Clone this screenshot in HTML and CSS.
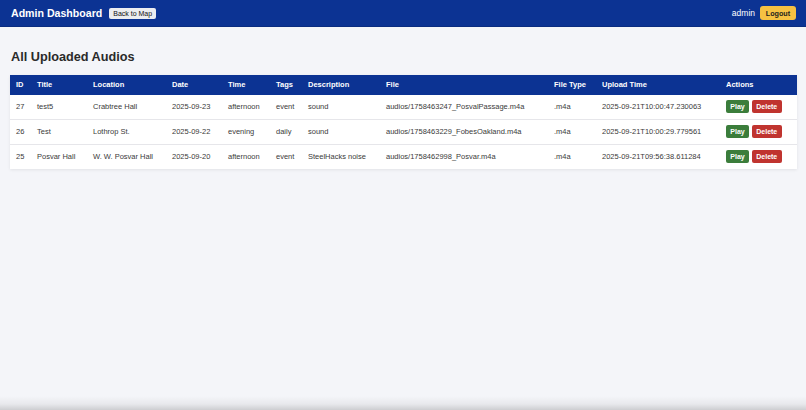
FILE: index.html
```html
<!DOCTYPE html>
<html lang="en">
<head>
<meta charset="utf-8">
<title>Admin Dashboard</title>
<link rel="stylesheet" href="styles.css">
</head>
<body>
<header class="topbar">
  <div class="brand">
    <span class="brand-title">Admin Dashboard</span>
    <button class="btn-map">Back to Map</button>
  </div>
  <div class="user">
    <span class="user-name">admin</span>
    <button class="btn-logout">Logout</button>
  </div>
</header>
<main class="content">
  <h1 class="page-title">All Uploaded Audios</h1>
  <table class="audio-table">
    <colgroup>
      <col class="c-id"><col class="c-title"><col class="c-loc"><col class="c-date"><col class="c-time"><col class="c-tags"><col class="c-desc"><col class="c-file"><col class="c-type"><col class="c-upload"><col class="c-actions">
    </colgroup>
    <thead>
      <tr><th>ID</th><th>Title</th><th>Location</th><th>Date</th><th>Time</th><th>Tags</th><th>Description</th><th>File</th><th>File Type</th><th>Upload Time</th><th>Actions</th></tr>
    </thead>
    <tbody>
      <tr><td>27</td><td>test5</td><td>Crabtree Hall</td><td>2025-09-23</td><td>afternoon</td><td>event</td><td>sound</td><td>audios/1758463247_PosvalPassage.m4a</td><td>.m4a</td><td>2025-09-21T10:00:47.230063</td><td class="actions"><button class="btn-play">Play</button><button class="btn-delete">Delete</button></td></tr>
      <tr><td>26</td><td>Test</td><td>Lothrop St.</td><td>2025-09-22</td><td>evening</td><td>daily</td><td>sound</td><td>audios/1758463229_FobesOakland.m4a</td><td>.m4a</td><td>2025-09-21T10:00:29.779561</td><td class="actions"><button class="btn-play">Play</button><button class="btn-delete">Delete</button></td></tr>
      <tr><td>25</td><td>Posvar Hall</td><td>W. W. Posvar Hall</td><td>2025-09-20</td><td>afternoon</td><td>event</td><td>SteelHacks noise</td><td>audios/1758462998_Posvar.m4a</td><td>.m4a</td><td>2025-09-21T09:56:38.611284</td><td class="actions"><button class="btn-play">Play</button><button class="btn-delete">Delete</button></td></tr>
    </tbody>
  </table>
</main>
</body>
</html>
```
FILE: styles.css
```css
html {
  height: 100%;
  background: #f4f5f9;
}
body {
  margin: 0;
  min-height: 100%;
  font-family: "Liberation Sans", Arial, sans-serif;
  color: #333;
  background: linear-gradient(to bottom, rgba(0,0,0,0) calc(100% - 14px), rgba(0,0,0,0.05) calc(100% - 6px), rgba(0,0,0,0.16) 100%);
  min-height: 410px;
}
.topbar {
  height: 27px;
  box-sizing: border-box;
  background: #0c3393;
  color: #fff;
  display: flex;
  align-items: center;
  justify-content: space-between;
  padding: 0 10px 0 11px;
  border-bottom: 1px solid #0a2c80;
}
.brand {
  display: flex;
  align-items: center;
  gap: 7px;
}
.brand-title {
  font-weight: bold;
  font-size: 10.6px;
}
.btn-map {
  font-family: "Liberation Sans", Arial, sans-serif;
  font-size: 7px;
  height: 11px;
  padding: 0 4px;
  line-height: 11px;
  border: none;
  border-radius: 2px;
  background: #ecedf0;
  color: #111;
  margin-top: 1px;
}
.user {
  display: flex;
  align-items: center;
  gap: 5px;
}
.user-name {
  font-size: 8.5px;
}
.btn-logout {
  font-family: "Liberation Sans", Arial, sans-serif;
  font-weight: bold;
  font-size: 7.2px;
  height: 14px;
  width: 36px;
  padding: 0;
  border: none;
  border-radius: 3px;
  background: #f6c142;
  color: #1d1d1d;
}
.content {
  padding: 22px 9px 0 10px;
}
.page-title {
  margin: 0 0 10px 1px;
  font-size: 12.7px;
  line-height: 16px;
  font-weight: bold;
  color: #2a2a2a;
}
.audio-table {
  width: 787px;
  table-layout: fixed;
  border-collapse: collapse;
  background: #fff;
  box-shadow: 0 1px 3px rgba(0,0,0,0.08);
  font-size: 7.5px;
}
.c-id { width: 21px; }
.c-title { width: 56px; }
.c-loc { width: 79px; }
.c-date { width: 56px; }
.c-time { width: 48px; }
.c-tags { width: 32px; }
.c-desc { width: 78px; }
.c-file { width: 168px; }
.c-type { width: 48px; }
.c-upload { width: 124px; }
.c-actions { width: 77px; }
.audio-table th {
  background: #0c3393;
  color: #fff;
  font-weight: bold;
  text-align: left;
  padding: 5px 0 5px 6px;
  line-height: 9.5px;
  white-space: nowrap;
}
.audio-table td {
  padding: 0 0 0 6px;
  height: 24px;
  line-height: 9px;
  border-bottom: 1px solid #e6e6ea;
  color: #3a3a3a;
  white-space: nowrap;
  vertical-align: middle;
}
.audio-table tbody tr:last-child td {
  border-bottom: none;
}
.audio-table td.actions {
  font-size: 0;
}
.btn-play, .btn-delete {
  font-family: "Liberation Sans", Arial, sans-serif;
  font-weight: bold;
  font-size: 7px;
  height: 12.5px;
  padding: 0;
  border: none;
  border-radius: 2px;
  color: #fff;
  vertical-align: middle;
}
.btn-play {
  width: 23px;
  background: #3b7d3b;
  margin-right: 2.5px;
}
.btn-delete {
  width: 30.5px;
  background: #c0342f;
}
```
